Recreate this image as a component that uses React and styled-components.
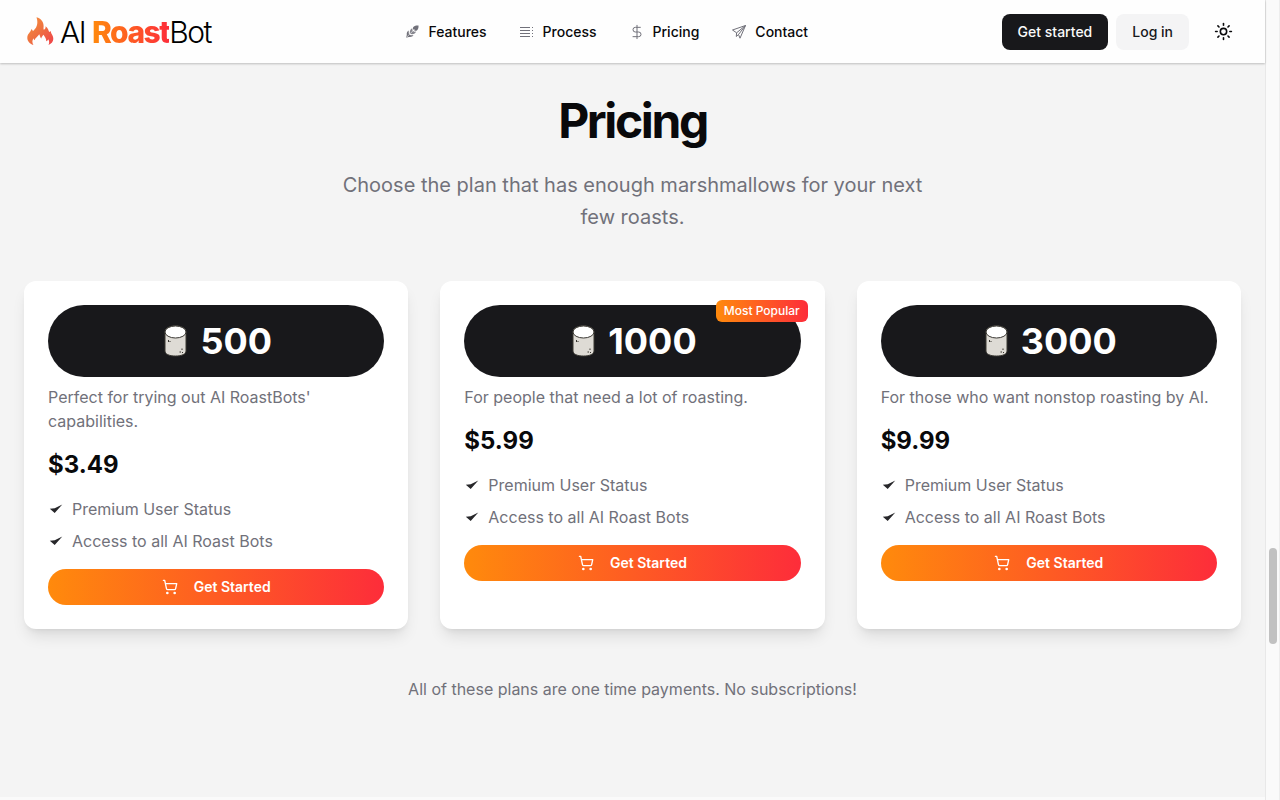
import React from "react";
import styled, { createGlobalStyle } from "styled-components";
import { Sun, ShoppingCart, DollarSign } from "lucide-react";

const GlobalStyle = createGlobalStyle`
  *, *::before, *::after { box-sizing: border-box; }
  body {
    margin: 0;
    background: #fafafa;
    color: #09090b;
    font-family: Inter, "Liberation Sans", sans-serif;
    font-size: 16px;
    line-height: 24px;
  }
  h1, h2, p, ul { margin: 0; padding: 0; }
  ul { list-style: none; }
  a { color: inherit; text-decoration: none; }
  button { border: 0; font: inherit; cursor: pointer; }
`;

const Shell = styled.div`
  display: flex;
  min-height: 100vh;
`;

const Content = styled.div`
  flex: 1;
  min-width: 0;
`;

const ScrollTrack = styled.div`
  width: 15px;
  flex: none;
  border-left: 1px solid #e8e8e8;
  border-right: 1px solid #ededed;
  background: #fafafa;
  display: grid;
  grid-template-rows: 137fr 24fr 39fr;
  justify-items: center;
`;

const ScrollThumb = styled.div`
  grid-row: 2;
  width: 8px;
  border-radius: 4px;
  background: #c1c1c1;
`;

const Header = styled.header`
  position: relative;
  display: flex;
  justify-content: space-between;
  align-items: center;
  height: 63px;
  padding: 0 24px;
  background: #fefefe;
  box-shadow: 0 1px 2px rgba(0, 0, 0, 0.22);
`;

const Logo = styled.a`
  display: flex;
  align-items: center;
  gap: 4px;
  font-size: 30px;
  line-height: 36px;
  font-weight: 300;
  letter-spacing: -0.05em;
  color: #000;
`;

const LogoAccent = styled.span`
  font-weight: 800;
  background: linear-gradient(to right, #ff8a0c, #fd2d3a);
  background-clip: text;
  color: transparent;
`;

const Nav = styled.nav`
  display: flex;
  gap: 32px;
`;

const NavLink = styled.a`
  display: flex;
  align-items: center;
  gap: 8px;
  font-size: 14px;
  line-height: 20px;
  font-weight: 500;

  svg { color: #71717a; }
`;

const Actions = styled.div`
  display: flex;
  align-items: center;
  gap: 8px;
`;

const Button = styled.button`
  height: 36px;
  padding: 0 16px;
  border-radius: 8px;
  font-size: 14px;
  line-height: 20px;
  font-weight: 500;
  color: ${(p) => (p.$primary ? "#fafafa" : "#18181b")};
  background: ${(p) => (p.$primary ? "#18181b" : "#f4f4f5")};
`;

const IconButton = styled.button`
  display: grid;
  place-items: center;
  width: 36px;
  height: 36px;
  margin-left: 8px;
  padding: 0;
  color: #09090b;
  background: transparent;
`;

const Section = styled.section`
  padding: 34px 24px 96px;
  background: #f4f4f4;
  text-align: center;
`;

const Title = styled.h2`
  font-size: 48px;
  line-height: 48px;
  font-weight: 700;
  letter-spacing: -0.05em;
`;

const Subtitle = styled.p`
  max-width: 608px;
  margin: 24px auto 48px;
  font-size: 20px;
  line-height: 32px;
  color: #71717a;
`;

const Plans = styled.div`
  display: grid;
  grid-template-columns: repeat(3, 1fr);
  gap: 32px;
  text-align: left;
`;

const Card = styled.article`
  position: relative;
  padding: 24px;
  border-radius: 12px;
  background: #fff;
  box-shadow: 0 10px 15px -3px rgba(0, 0, 0, 0.1), 0 4px 6px -4px rgba(0, 0, 0, 0.1);
`;

const Badge = styled.span`
  position: absolute;
  top: 19px;
  right: 17px;
  padding: 3px 8px;
  border-radius: 6px;
  font-size: 12px;
  line-height: 16px;
  font-weight: 500;
  color: #fff;
  background: linear-gradient(to right, #ff8a0c, #fd2d3a);
`;

const Amount = styled.div`
  display: flex;
  justify-content: center;
  align-items: center;
  gap: 8px;
  padding: 16px;
  border-radius: 36px;
  font-size: 36px;
  line-height: 40px;
  font-weight: 700;
  color: #fff;
  background: #18181b;
`;

const Description = styled.p`
  margin-top: 8px;
  color: #71717a;
`;

const Price = styled.p`
  margin: 16px 0;
  font-size: 24px;
  line-height: 32px;
  font-weight: 700;
`;

const Perks = styled.ul`
  display: grid;
  gap: 8px;
  margin-bottom: 16px;
  color: #71717a;
`;

const Perk = styled.li`
  display: flex;
  align-items: center;
  gap: 8px;
`;

const BuyButton = styled.button`
  display: flex;
  justify-content: center;
  align-items: center;
  gap: 16px;
  width: 100%;
  height: 36px;
  border-radius: 18px;
  font-size: 14px;
  line-height: 20px;
  font-weight: 600;
  color: #fff;
  background: linear-gradient(to right, #ff8a0c, #fd2d3a);
`;

const Footnote = styled.p`
  margin-top: 48px;
  color: #71717a;
`;

const FlameIcon = () => (
  <svg width="32" height="32" viewBox="0 0 32 32" aria-hidden="true">
    <defs>
      <linearGradient id="flame" x1="0" y1="0" x2="1" y2="1">
        <stop offset="0" stopColor="#f6933c" />
        <stop offset="0.5" stopColor="#ee7040" />
        <stop offset="1" stopColor="#f0404a" />
      </linearGradient>
    </defs>
    <path
      fill="url(#flame)"
      d="M12.5 1.2C17 2.500 20 6 19.600 10.500C19.500 12 19.400 13 19.800 13.700C21.200 13.500 21.800 12 21.600 10.300C24.200 12.500 24.400 14.500 25.200 16C25.800 15.500 26.400 15.200 27 15.200C26.500 17.500 29.500 19.200 29.300 23C29.200 25.600 27.600 27.600 24.500 29C25.600 26.800 25.300 24.900 24.200 23.200C23.800 24.300 23.200 24.900 22.300 25.200C22.300 22.300 20.800 20.900 19.500 18.800C18.200 20.400 17.500 21.200 17.300 22.600C16.200 21.400 16 19.700 15.300 18.200C13.800 20.500 11.300 21.600 10.600 24.200C9.900 23.700 9.600 23 9.500 22.200C8 24.500 8.100 26.600 9.400 29C5.500 27.600 3.200 24.800 3.300 21.400C3.400 17.600 6.600 16.500 7.200 13.200C8.200 13.600 8.700 14.200 8.900 15.200C12.200 12.300 14.800 8.200 12.500 1.200Z"
    />
  </svg>
);

const MarshmallowIcon = () => (
  <svg width="32" height="32" viewBox="0 0 32 32" aria-hidden="true">
    <path d="M5 7C5 3 10 .8 15.500 .8S26 3 26 7L26 26C26 29 22 31 15.500 31S5 29 5 26Z" fill="#dedbd5" stroke="#3a3833" strokeWidth="1" />
    <ellipse cx="15.500" cy="7" rx="10.500" ry="6" fill="#fff" stroke="#3a3833" strokeWidth="1" />
    <path d="M8.500 15v2M9.500 16.500h1M22 23.500v1.500M19.500 27h1.500M22 27.500h1" stroke="#38352f" strokeWidth="1" />
  </svg>
);

const CheckIcon = () => (
  <svg width="16" height="16" viewBox="0 0 16 16" aria-hidden="true">
    <path d="M1.800 7.800L6.700 7.200L14.300 3.400L6.700 12Z" fill="#27272a" />
  </svg>
);

const FeaturesIcon = () => (
  <svg width="16" height="16" viewBox="0 0 16 16" fill="currentColor" aria-hidden="true">
    <path d="M9 3.500C10.200 1.700 12.500 1.300 14.500 1.600C14.700 3.700 14.200 5.600 12.500 6.800L10.800 6.700L9 5Z" />
    <path d="M8.300 4.200L8.500 6.400L10.200 7.700L12 7.500C11.500 9.200 10 10.200 8.300 10.200L5.700 9.800L5.900 7.500C6.100 5.900 7 4.800 8.300 4.200Z" opacity="0.85" />
    <path d="M4.700 6.500C3.200 7.300 2.500 9 2.800 11L2 13.700L4.900 12.900C7 13.200 8.600 12.700 9.500 11.300L6.500 11.200L4.700 9.500Z" />
    <path d="M2.300 13.500L10.500 5.300" stroke="#fefefe" strokeWidth="0.6" />
  </svg>
);

const ProcessIcon = () => (
  <svg width="16" height="16" viewBox="0 0 16 16" stroke="currentColor" fill="none" aria-hidden="true">
    <path d="M1 3.500h10M1 6.500h10M1 9.500h10M1 12.500h10" />
    <path d="M13 3.500h1M13 6.500h1M13 9.500h1M13 12.500h1" />
  </svg>
);

const ContactIcon = () => (
  <svg width="16" height="16" viewBox="0 0 16 16" stroke="currentColor" fill="none" strokeLinejoin="round" aria-hidden="true">
    <path d="M1.500 6L14.500 1.500L9 14.200L7.500 10.500L5.300 12.500L5.600 8.800Z" />
    <path d="M5.600 8.800L14.500 1.500L7.500 10.500" />
  </svg>
);

const PricingIcon = () => <DollarSign size={16} strokeWidth={1.5} />;

const navItems = [
  { label: "Features", Icon: FeaturesIcon },
  { label: "Process", Icon: ProcessIcon },
  { label: "Pricing", Icon: PricingIcon },
  { label: "Contact", Icon: ContactIcon },
];

const perks = ["Premium User Status", "Access to all AI Roast Bots"];

const plans = [
  { amount: "500", description: "Perfect for trying out AI RoastBots' capabilities.", price: "$3.49" },
  { amount: "1000", description: "For people that need a lot of roasting.", price: "$5.99", popular: true },
  { amount: "3000", description: "For those who want nonstop roasting by AI.", price: "$9.99" },
];

export default function App() {
  return (
    <>
      <GlobalStyle />
      <Shell>
        <Content>
          <Header>
            <Logo href="#home">
              <FlameIcon />
              <span>AI <LogoAccent>Roast</LogoAccent>Bot</span>
            </Logo>
            <Nav>
              {navItems.map(({ label, Icon }) => (
                <NavLink key={label} href={"#" + label.toLowerCase()}>
                  <Icon />
                  {label}
                </NavLink>
              ))}
            </Nav>
            <Actions>
              <Button $primary>Get started</Button>
              <Button>Log in</Button>
              <IconButton aria-label="Toggle theme"><Sun size={19} /></IconButton>
            </Actions>
          </Header>
          <Section id="pricing">
            <Title>Pricing</Title>
            <Subtitle>Choose the plan that has enough marshmallows for your next few roasts.</Subtitle>
            <Plans>
              {plans.map((plan) => (
                <Card key={plan.amount}>
                  <Amount><MarshmallowIcon />{plan.amount}</Amount>
                  {plan.popular && <Badge>Most Popular</Badge>}
                  <Description>{plan.description}</Description>
                  <Price>{plan.price}</Price>
                  <Perks>
                    {perks.map((perk) => (
                      <Perk key={perk}><CheckIcon />{perk}</Perk>
                    ))}
                  </Perks>
                  <BuyButton><ShoppingCart size={16} />Get Started</BuyButton>
                </Card>
              ))}
            </Plans>
            <Footnote>All of these plans are one time payments. No subscriptions!</Footnote>
          </Section>
        </Content>
        <ScrollTrack aria-hidden="true"><ScrollThumb /></ScrollTrack>
      </Shell>
    </>
  );
}
